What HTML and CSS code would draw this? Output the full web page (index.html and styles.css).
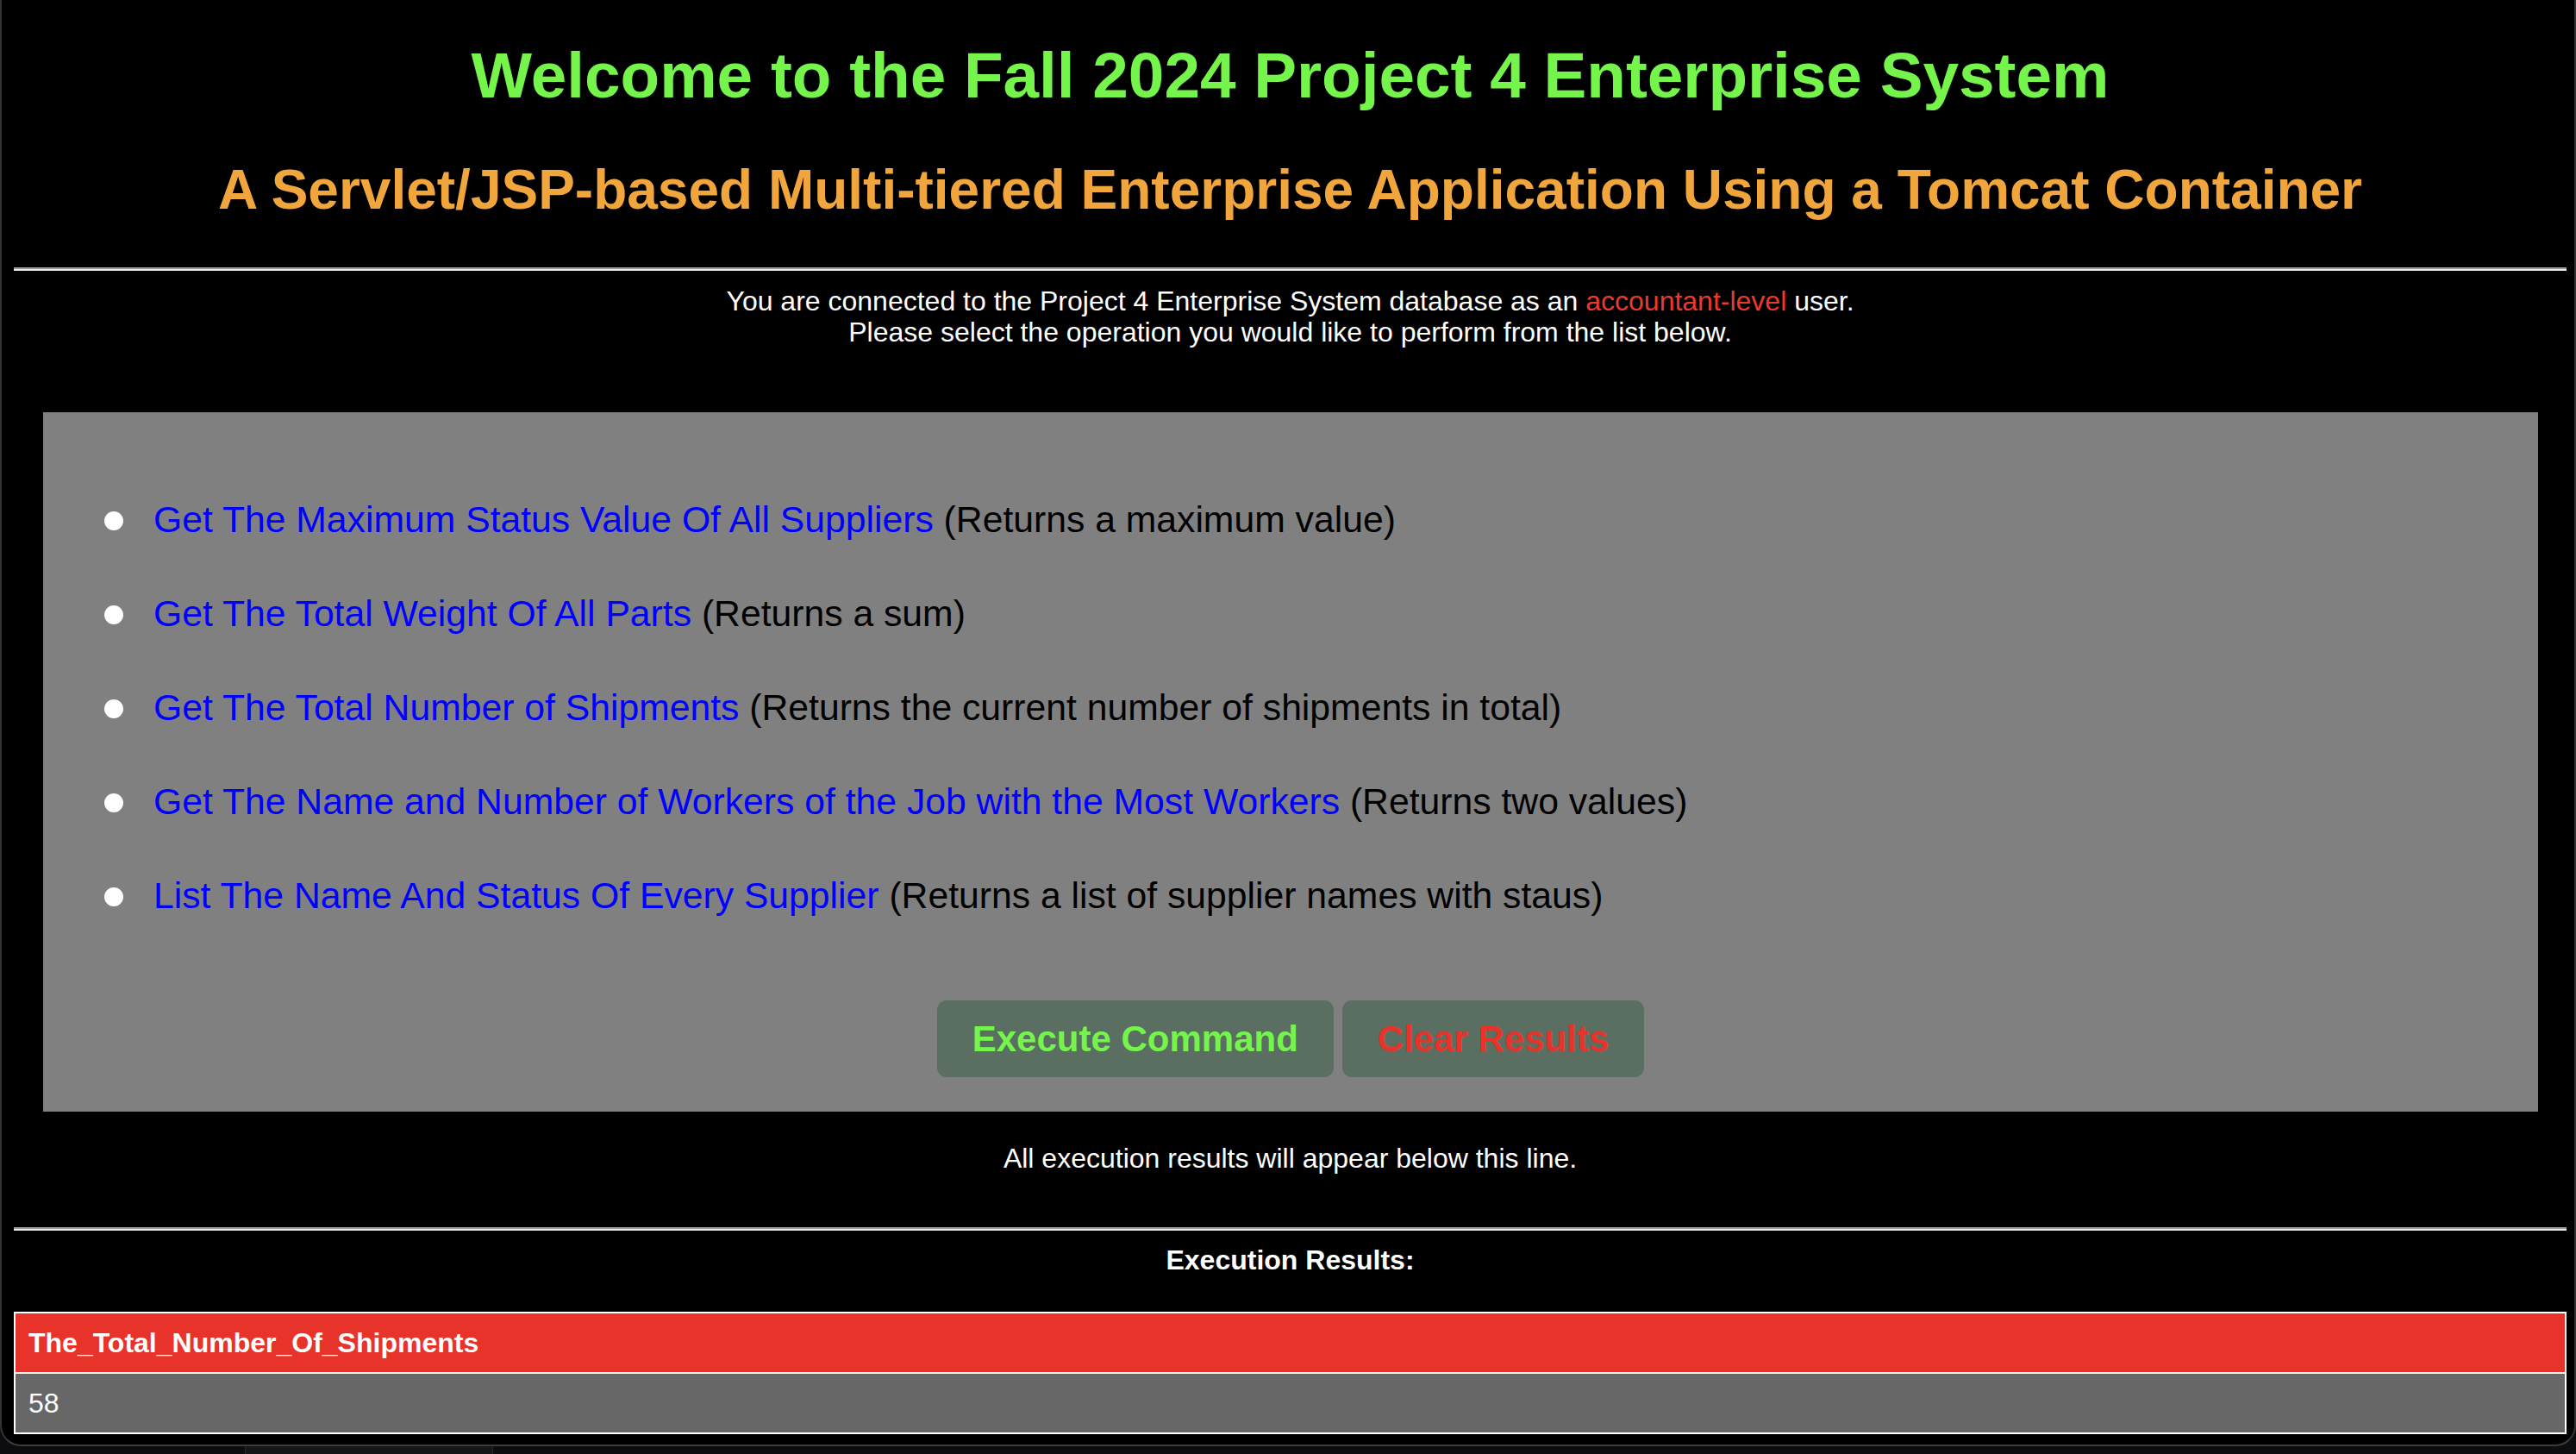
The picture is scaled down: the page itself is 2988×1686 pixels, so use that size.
FILE: index.html
```html
<!DOCTYPE html>
<html lang="en">
<head>
<meta charset="utf-8">
<title>Project 4 Enterprise System</title>
<link rel="stylesheet" href="styles.css">
</head>
<body>
<div class="window">
  <div class="page">
    <h1 class="title">Welcome to the Fall 2024 Project 4 Enterprise System</h1>
    <h2 class="subtitle">A Servlet/JSP-based Multi-tiered Enterprise Application Using a Tomcat Container</h2>
    <hr class="rule">
    <p class="intro">You are connected to the Project 4 Enterprise System database as an <span class="role">accountant-level</span> user.<br>Please select the operation you would like to perform from the list below.</p>
    <form class="panel">
      <ul class="ops">
        <li class="op"><span class="dot"></span><span class="op-text"><a class="op-link" href="#">Get The Maximum Status Value Of All Suppliers</a> (Returns a maximum value)</span></li>
        <li class="op"><span class="dot"></span><span class="op-text"><a class="op-link" href="#">Get The Total Weight Of All Parts</a> (Returns a sum)</span></li>
        <li class="op"><span class="dot"></span><span class="op-text"><a class="op-link" href="#">Get The Total Number of Shipments</a> (Returns the current number of shipments in total)</span></li>
        <li class="op"><span class="dot"></span><span class="op-text"><a class="op-link" href="#">Get The Name and Number of Workers of the Job with the Most Workers</a> (Returns two values)</span></li>
        <li class="op"><span class="dot"></span><span class="op-text"><a class="op-link" href="#">List The Name And Status Of Every Supplier</a> (Returns a list of supplier names with staus)</span></li>
      </ul>
      <div class="actions">
        <button type="button" class="btn btn-exec">Execute Command</button>
        <button type="button" class="btn btn-clear">Clear Results</button>
      </div>
    </form>
    <p class="note">All execution results will appear below this line.</p>
    <hr class="rule rule-results">
    <p class="results-title">Execution Results:</p>
    <table class="results">
      <thead>
        <tr><th class="results-head">The_Total_Number_Of_Shipments</th></tr>
      </thead>
      <tbody>
        <tr><td class="results-cell">58</td></tr>
      </tbody>
    </table>
  </div>
</div>
<div class="desktop"><div class="behind"></div></div>
</body>
</html>
```

FILE: styles.css
```css
html, body {
  margin: 0;
  padding: 0;
  background: #0c0d11;
}

body {
  font-family: "Liberation Sans", Arial, Helvetica, sans-serif;
  color: #ffffff;
}

.window {
  box-sizing: border-box;
  height: 1677px;
  background: #000000;
  border-left: 2px solid #343434;
  border-right: 2px solid #343434;
  border-bottom: 2px solid #3c3c3c;
  border-bottom-left-radius: 24px;
  border-bottom-right-radius: 24px;
  overflow: hidden;
}

.page {
  padding: 0 9px 0 14px;
}

.title {
  margin: 45px 0 0;
  font-size: 74.7px;
  line-height: 85px;
  font-weight: bold;
  text-align: center;
  color: #75f54c;
}

.subtitle {
  margin: 53px 0 0;
  font-size: 64px;
  line-height: 74px;
  font-weight: bold;
  text-align: center;
  color: #f0a63c;
}

.rule {
  height: 0;
  margin: 53px 0 0;
  border: 0;
  border-top: 2px solid #9d9d9d;
  border-bottom: 2px solid #ececec;
}

.intro {
  margin: 17px 0 0;
  font-size: 32px;
  line-height: 36px;
  text-align: center;
  color: #ffffff;
}

.role {
  color: #ea3a2e;
}

.panel {
  margin: 75px 33px 0 34px;
  padding: 100px 0 40px;
  background: #808080;
}

.ops {
  list-style: none;
  margin: 0;
  padding: 0 0 0 71px;
}

.op {
  display: flex;
  align-items: center;
  gap: 35px;
  font-size: 42.7px;
  line-height: 48px;
  color: #000000;
  margin-bottom: 61px;
}

.op:last-child {
  margin-bottom: 0;
}

.dot {
  flex: none;
  width: 22px;
  height: 22px;
  margin-top: 3px;
  border-radius: 50%;
  background: #ffffff;
}

.op-link {
  color: #0000ff;
  text-decoration: none;
}

.actions {
  display: flex;
  justify-content: center;
  gap: 10px;
  margin-top: 98px;
}

.btn {
  font-family: "Liberation Sans", Arial, Helvetica, sans-serif;
  font-size: 42px;
  line-height: 49px;
  font-weight: bold;
  padding: 20px 41px;
  border: 0;
  border-radius: 11px;
  background: #5a6f61;
  cursor: pointer;
}

.btn-exec {
  color: #75f54c;
}

.btn-clear {
  color: #e8332a;
}

.note {
  margin: 36px 0 0;
  font-size: 32px;
  line-height: 36px;
  text-align: center;
}

.rule-results {
  margin-top: 62px;
}

.results-title {
  margin: 16px 0 0;
  font-size: 32px;
  line-height: 36px;
  font-weight: bold;
  text-align: center;
}

.results {
  width: 100%;
  margin-top: 42px;
  border-collapse: collapse;
  border: 2px solid #ffffff;
}

.results-head,
.results-cell {
  padding: 16px 15px;
  font-size: 32px;
  line-height: 36px;
  text-align: left;
  color: #ffffff;
  border: 2px solid #ffffff;
}

.results-head {
  font-weight: bold;
  background: #e8332a;
}

.results-cell {
  font-weight: normal;
  background: #676767;
}

.desktop {
  height: 9px;
  background: #0c0d11;
  overflow: hidden;
}

.behind {
  width: 286px;
  height: 100%;
  margin-left: 284px;
  background: #151618;
  border-left: 1px solid #2a2a2a;
  border-right: 1px solid #2a2a2a;
}
```
